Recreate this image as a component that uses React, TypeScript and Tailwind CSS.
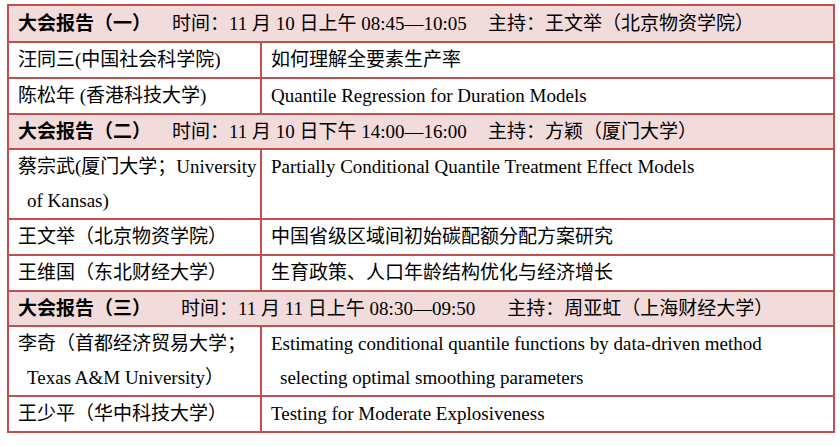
const font = { fontFamily: '"Liberation Serif", "Noto Sans CJK SC", serif' };

type Row = { left: string[]; right: string[] };
type Block = { title: string; time: string; host: string; gapA: string; gapB: string; rows: Row[] };

const blocks: Block[] = [
  {
    title: '大会报告（一）',
    time: '时间：11 月 10 日上午 08:45—10:05',
    host: '主持：王文举（北京物资学院）',
    gapA: 'ml-[21px]',
    gapB: 'ml-[21px]',
    rows: [
      { left: ['汪同三(中国社会科学院)'], right: ['如何理解全要素生产率'] },
      { left: ['陈松年 (香港科技大学)'], right: ['Quantile Regression for Duration Models'] },
    ],
  },
  {
    title: '大会报告（二）',
    time: '时间：11 月 10 日下午 14:00—16:00',
    host: '主持：方颖（厦门大学）',
    gapA: 'ml-[21px]',
    gapB: 'ml-[21px]',
    rows: [
      { left: ['蔡宗武(厦门大学；University', 'of Kansas)'], right: ['Partially Conditional Quantile Treatment Effect Models'] },
      { left: ['王文举（北京物资学院）'], right: ['中国省级区域间初始碳配额分配方案研究'] },
      { left: ['王维国（东北财经大学）'], right: ['生育政策、人口年龄结构优化与经济增长'] },
    ],
  },
  {
    title: '大会报告（三）',
    time: '时间：11 月 11 日上午 08:30—09:50',
    host: '主持：周亚虹（上海财经大学）',
    gapA: 'ml-[30px]',
    gapB: 'ml-[32px]',
    rows: [
      {
        left: ['李奇（首都经济贸易大学；', 'Texas A&M University）'],
        right: ['Estimating conditional quantile functions by data-driven method', 'selecting optimal smoothing parameters'],
      },
      { left: ['王少平（华中科技大学）'], right: ['Testing for Moderate Explosiveness'] },
    ],
  },
];

function Lines({ lines }: { lines: string[] }) {
  return (
    <>
      {lines.map((l, i) => (
        <div key={i} className={i > 0 ? 'pl-[9px]' : ''}>
          {l}
        </div>
      ))}
    </>
  );
}

export default function App() {
  return (
    <div className="bg-white w-[840px] h-[447px] pt-[4px] pl-[7px]" style={font}>
      <div className="w-[828px] border-2 border-[#c0504d] text-black text-[19px] leading-[34px] whitespace-nowrap">
        {blocks.map((b, bi) => (
          <div key={bi}>
            <div
              className={`bg-[#f2dbdb] h-[35px] flex items-center px-[9px] ${bi > 0 ? 'border-t-2 border-[#c0504d]' : ''}`}
            >
              <span className="font-bold">{b.title}</span>
              <span className={b.gapA}>{b.time}</span>
              <span className={b.gapB}>{b.host}</span>
            </div>
            {b.rows.map((r, ri) => (
              <div key={ri} className="flex border-t-2 border-[#c0504d]">
                <div className="w-[253px] px-[9px] border-r-2 border-[#c0504d]">
                  <Lines lines={r.left} />
                </div>
                <div className="flex-1 px-[9px]">
                  <Lines lines={r.right} />
                </div>
              </div>
            ))}
          </div>
        ))}
      </div>
    </div>
  );
}
